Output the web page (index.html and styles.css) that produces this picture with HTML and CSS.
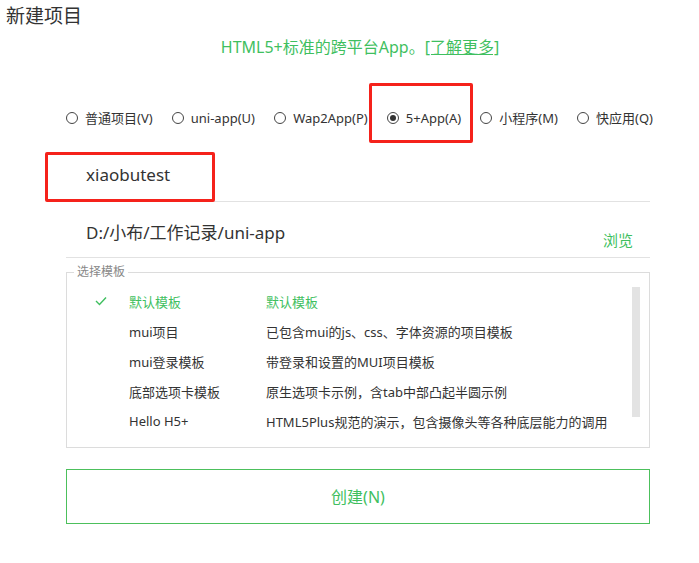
FILE: index.html
```html
<!DOCTYPE html>
<html lang="zh">
<head>
<meta charset="utf-8">
<link rel="stylesheet" href="styles.css">
</head>
<body>
<div class="page">
  <div class="title">新建项目</div>
  <div class="content">
    <div class="subtitle">HTML5+标准的跨平台App。<a class="more">[了解更多]</a></div>
    <div class="radios">
      <label class="radio"><span class="dot"></span>普通项目(V)</label>
      <label class="radio"><span class="dot"></span>uni-app(U)</label>
      <label class="radio"><span class="dot"></span>Wap2App(P)</label>
      <label class="radio sel"><span class="dot"></span>5+App(A)</label>
      <label class="radio"><span class="dot"></span>小程序(M)</label>
      <label class="radio"><span class="dot"></span>快应用(Q)</label>
    </div>
    <div class="field name">xiaobutest</div>
    <div class="field path"><span>D:/小布/工作记录/uni-app</span><span class="browse">浏览</span></div>
    <fieldset class="tpl">
      <legend>选择模板</legend>
      <div class="tpl-body">
        <div class="list">
          <div class="row active"><span class="chk"><svg width="12" height="10" viewBox="0 0 12 10"><polyline points="1,5 4.5,8.5 11,1.5" fill="none" stroke="#3fbf5f" stroke-width="1.4"/></svg></span><span class="c1">默认模板</span><span class="c2">默认模板</span></div>
          <div class="row"><span class="chk"></span><span class="c1">mui项目</span><span class="c2">已包含mui的js、css、字体资源的项目模板</span></div>
          <div class="row"><span class="chk"></span><span class="c1">mui登录模板</span><span class="c2">带登录和设置的MUI项目模板</span></div>
          <div class="row"><span class="chk"></span><span class="c1">底部选项卡模板</span><span class="c2">原生选项卡示例，含tab中部凸起半圆示例</span></div>
          <div class="row"><span class="chk"></span><span class="c1">Hello H5+</span><span class="c2">HTML5Plus规范的演示，包含摄像头等各种底层能力的调用</span></div>
        </div>
        <div class="scroll"></div>
      </div>
    </fieldset>
    <button class="create">创建(N)</button>
  </div>
  <div class="mark mark-app"></div>
  <div class="mark mark-name"></div>
</div>
</body>
</html>
```

FILE: styles.css
```css
* { box-sizing: border-box; }
html, body { margin: 0; padding: 0; background: #fff; }
body {
  font-family: "Noto Sans", "Noto Sans CJK SC", sans-serif;
  color: #333;
  width: 699px;
  height: 563px;
  overflow: hidden;
}
.page { position: relative; height: 563px; }
.title {
  font-size: 19px;
  line-height: 26px;
  padding: 3px 0 0 6px;
  height: 31px;
}
.content { margin-left: 66px; width: 584px; }
.subtitle {
  text-align: center;
  color: #3fbf5f;
  font-size: 16px;
  line-height: 20px;
  padding-top: 6px;
  height: 30px;
  padding-left: 4px;
}
.more { color: #3fbf5f; text-decoration: underline; }
.radios {
  display: flex;
  justify-content: space-between;
  width: 587px;
  margin-top: 47px;
  height: 20px;
  align-items: center;
  font-size: 13px;
  white-space: nowrap;
}
.radio { display: flex; align-items: center; gap: 7px; line-height: 20px; }
.dot {
  width: 12px; height: 12px;
  border: 1px solid #444;
  border-radius: 50%;
  display: inline-flex; align-items: center; justify-content: center;
}
.sel .dot::after {
  content: ""; width: 6px; height: 6px; border-radius: 50%; background: #333;
}
.field {
  border-bottom: 1px solid #e2e2e2;
  font-size: 17px;
  padding-left: 20px;
  display: flex;
  align-items: center;
}
.name { margin-top: 18px; height: 56px; padding-top: 2px; }
.path { height: 56px; justify-content: space-between; padding-top: 4px; }
.browse { color: #3fbf5f; font-size: 15px; margin-right: 17px; margin-top: 15px; }
.tpl {
  margin: 7px 0 0 0;
  padding: 0;
  border: 1px solid #dcdcdc;
  height: 183px;
  min-width: 0;
}
.tpl legend {
  margin-left: 7px;
  padding: 0 3px;
  font-size: 12px;
  color: #888;
  line-height: 14px;
}
.tpl-body { display: flex; padding-top: 7px; }
.list { flex: 1; }
.row {
  display: flex;
  height: 30px;
  align-items: center;
  font-size: 13px;
  white-space: nowrap;
}
.row .chk { width: 62px; padding-left: 28px; display: flex; align-items: center; }
.row .c1 { width: 137px; }
.row.active { color: #3fbf5f; }
.scroll {
  width: 8px;
  height: 130px;
  background: #e3e3e3;
  margin-top: 1px;
  margin-right: 9px;
}
.create {
  display: block;
  margin-top: 21px;
  width: 584px;
  height: 55px;
  background: #fff;
  border: 1px solid #4cc05c;
  color: #3fbf5f;
  font-family: inherit;
  font-size: 16px;
  padding: 0 0 2px 0;
}
.mark { position: absolute; border: 3px solid #f5221b; border-radius: 2px; }
.mark-app { left: 369px; top: 83px; width: 104px; height: 60px; }
.mark-name { left: 45px; top: 152px; width: 170px; height: 50px; }
```
